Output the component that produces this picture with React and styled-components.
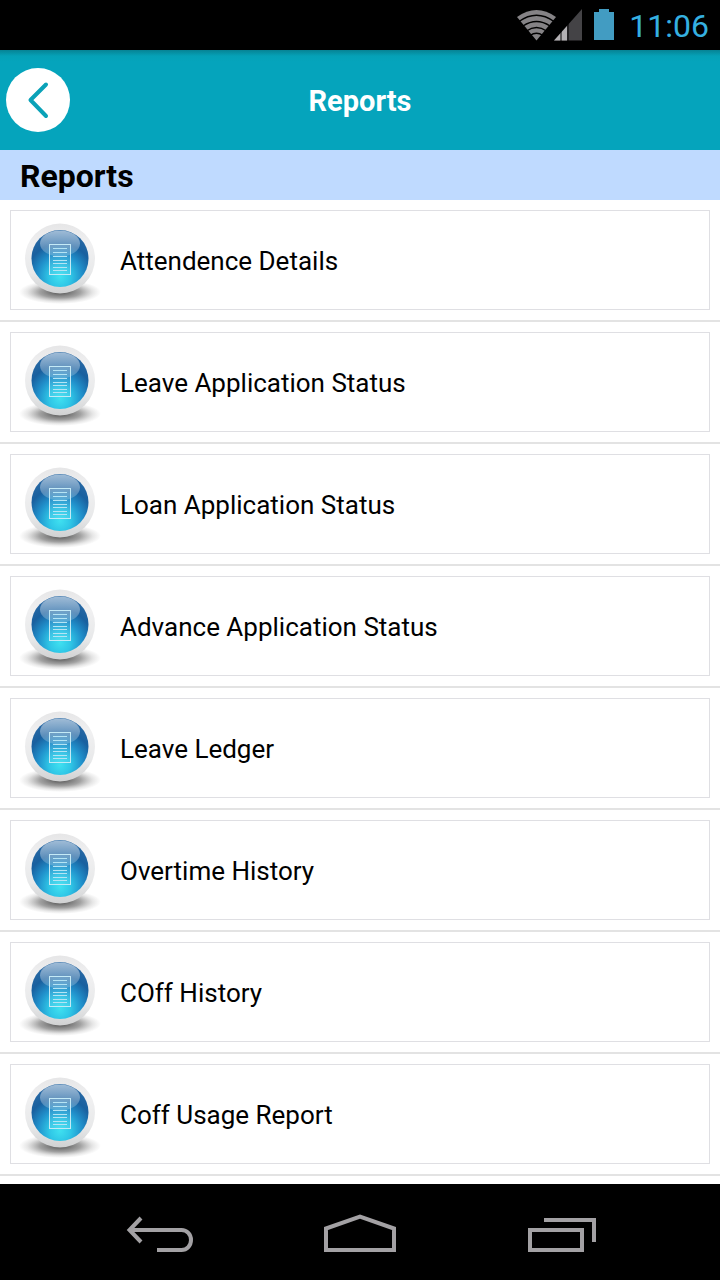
import React from "react";
import styled, { createGlobalStyle } from "styled-components";

const GlobalStyle = createGlobalStyle`
  * {
    box-sizing: border-box;
  }
  body {
    margin: 0;
    background: #fff;
    font-family: Roboto, sans-serif;
    color: #000;
  }
`;
const Screen = styled.div`
  display: flex;
  flex-direction: column;
  height: 100vh;
  overflow: hidden;
`;
const StatusBar = styled.div`
  display: flex;
  flex: none;
  justify-content: flex-end;
  align-items: center;
  height: 50px;
  padding-right: 11px;
  background: #000;
`;
const StatusIcons = styled.svg`
  display: block;
  width: 98px;
  height: 32px;
  margin-right: 14px;
`;
const Clock = styled.time`
  padding-top: 2px;
  color: #35b0e0;
  font-size: 32px;
  line-height: 48px;
`;
const Header = styled.header`
  display: grid;
  flex: none;
  grid-template-columns: 64px 1fr 64px;
  align-items: center;
  height: 100px;
  padding: 0 6px;
  background: linear-gradient(#068394 0, #05a1b7 6px, #05a4bc 12px);
`;
const BackButton = styled.button`
  width: 64px;
  height: 64px;
  padding: 0;
  border: 0;
  border-radius: 50%;
  background: #fff;
  svg {
    display: block;
  }
`;
const Title = styled.h1`
  margin: 0;
  padding-top: 2px;
  color: #fff;
  font-size: 29px;
  font-weight: 700;
  line-height: 40px;
  text-align: center;
`;
const SectionTitle = styled.h2`
  flex: none;
  margin: 0;
  padding: 2px 20px 0;
  background: #bfdaff;
  font-size: 32px;
  font-weight: 700;
  line-height: 48px;
`;
const List = styled.ul`
  flex: 1;
  min-height: 0;
  margin: 0;
  padding: 0;
  overflow: hidden;
  list-style: none;
`;
const Item = styled.li`
  padding: 10px;
  border-bottom: 2px solid #e3e3e3;
`;
const Card = styled.button`
  display: flex;
  align-items: center;
  gap: 11px;
  width: 100%;
  height: 100px;
  padding: 0;
  border: 1px solid #dfdfe3;
  background: #fff;
  color: #000;
  font-family: inherit;
  text-align: left;
`;
const Label = styled.span`
  padding-top: 2px;
  font-size: 26px;
  line-height: 36px;
`;
const Icon = styled.svg`
  display: block;
  flex: none;
  width: 98px;
  height: 98px;
`;
const NavBar = styled.nav`
  display: flex;
  flex: none;
  justify-content: center;
  height: 96px;
  background: #000;
`;
const NavButton = styled.button`
  display: flex;
  flex: 0 1 200px;
  justify-content: center;
  align-items: center;
  padding: 0;
  border: 0;
  background: none;
  svg {
    width: 72px;
    height: 40px;
    fill: none;
    stroke: #a3a1a4;
    stroke-width: 4;
  }
`;

const reports = [
  "Attendence Details",
  "Leave Application Status",
  "Loan Application Status",
  "Advance Application Status",
  "Leave Ledger",
  "Overtime History",
  "COff History",
  "Coff Usage Report",
];

function IconDefs() {
  return (
    <svg width="0" height="0" style={{ display: "block" }} aria-hidden="true">
      <defs>
        <linearGradient id="rim" x1="0" y1="0" x2="0" y2="1">
          <stop offset="0" stopColor="#e6e6e7" />
          <stop offset="0.3" stopColor="#f0f0f1" />
          <stop offset="0.7" stopColor="#e8e9ea" />
          <stop offset="1" stopColor="#d0d1d2" />
        </linearGradient>
        <radialGradient id="ball" cx="0.5" cy="0.82" r="0.86">
          <stop offset="0" stopColor="#3fe0f0" />
          <stop offset="0.22" stopColor="#2fc6e6" />
          <stop offset="0.45" stopColor="#2090cb" />
          <stop offset="0.68" stopColor="#19609f" />
          <stop offset="1" stopColor="#2f6ca6" />
        </radialGradient>
        <linearGradient id="gloss" x1="0" y1="0" x2="0" y2="1">
          <stop offset="0" stopColor="#fff" stopOpacity="0.55" />
          <stop offset="1" stopColor="#fff" stopOpacity="0.16" />
        </linearGradient>
        <radialGradient id="shade">
          <stop offset="0" stopColor="#222" stopOpacity="0.8" />
          <stop offset="0.5" stopColor="#444" stopOpacity="0.5" />
          <stop offset="0.8" stopColor="#666" stopOpacity="0.16" />
          <stop offset="1" stopColor="#777" stopOpacity="0" />
        </radialGradient>
      </defs>
    </svg>
  );
}

function ReportIcon() {
  return (
    <Icon viewBox="0 0 98 98" aria-hidden="true">
      <ellipse cx="49" cy="81" rx="41" ry="12" fill="url(#shade)" />
      <circle cx="49" cy="47.500" r="35" fill="url(#rim)" />
      <circle cx="49" cy="47.500" r="28.500" fill="url(#ball)" />
      <ellipse cx="49" cy="32.500" rx="20" ry="13" fill="url(#gloss)" />
      <rect
        x="38.500"
        y="33.500"
        width="21"
        height="30"
        fill="#fff"
        fillOpacity="0.08"
        stroke="#c4eaf6"
      />
      <path
        d="M42 37.500h14M42 41.500h14M42 45.500h14M42 49.500h14M42 52.500h14M42 56.500h14M42 59.500h14"
        stroke="#b5e4f4"
      />
    </Icon>
  );
}

export default function App() {
  return (
    <Screen>
      <GlobalStyle />
      <IconDefs />
      <StatusBar>
        <StatusIcons viewBox="517 9 98 32" aria-hidden="true">
          <path d="M517 17Q536.500 3 556 17L536.500 40.500Z" fill="#858386" />
          <path
            d="M519 21.500Q536.500 9 554 21.500M523 26Q536.500 17 550 26M526.500 31Q536.500 24 546.500 31M530 35.500Q536.500 31 543 35.500"
            fill="none"
            stroke="#000"
            strokeWidth="1.500"
          />
          <path d="M582 9V40.500H554Z" fill="#444346" />
          <path d="M567 26V40.500H554Z" fill="#b3b1b4" />
          <path d="M561 31V41M568 24V41" stroke="#000" />
          <path d="M599 9h10v3h5v28h-20v-28h5z" fill="#429cc2" />
        </StatusIcons>
        <Clock>11:06</Clock>
      </StatusBar>
      <Header>
        <BackButton aria-label="Back">
          <svg width="64" height="64" viewBox="0 0 64 64">
            <path
              d="M40 16.500L24.500 32L40 48"
              fill="none"
              stroke="#0aa2b8"
              strokeWidth="4"
              strokeLinecap="round"
              strokeLinejoin="round"
            />
          </svg>
        </BackButton>
        <Title>Reports</Title>
      </Header>
      <SectionTitle>Reports</SectionTitle>
      <List>
        {reports.map((name) => (
          <Item key={name}>
            <Card>
              <ReportIcon />
              <Label>{name}</Label>
            </Card>
          </Item>
        ))}
      </List>
      <NavBar>
        <NavButton aria-label="Back">
          <svg viewBox="0 0 72 40">
            <path d="M17 6L5.500 18L17 30M6 18H57.500C63 18 67 22.500 67 28S63 38 57.500 38H33" />
          </svg>
        </NavButton>
        <NavButton aria-label="Home">
          <svg viewBox="0 0 72 40">
            <path d="M2 38V16.500L36 4.500L70 16.500V38Z" />
          </svg>
        </NavButton>
        <NavButton aria-label="Recent apps">
          <svg viewBox="0 0 72 40">
            <path d="M6 18H58V38H6ZM20 8H70V30" />
          </svg>
        </NavButton>
      </NavBar>
    </Screen>
  );
}
